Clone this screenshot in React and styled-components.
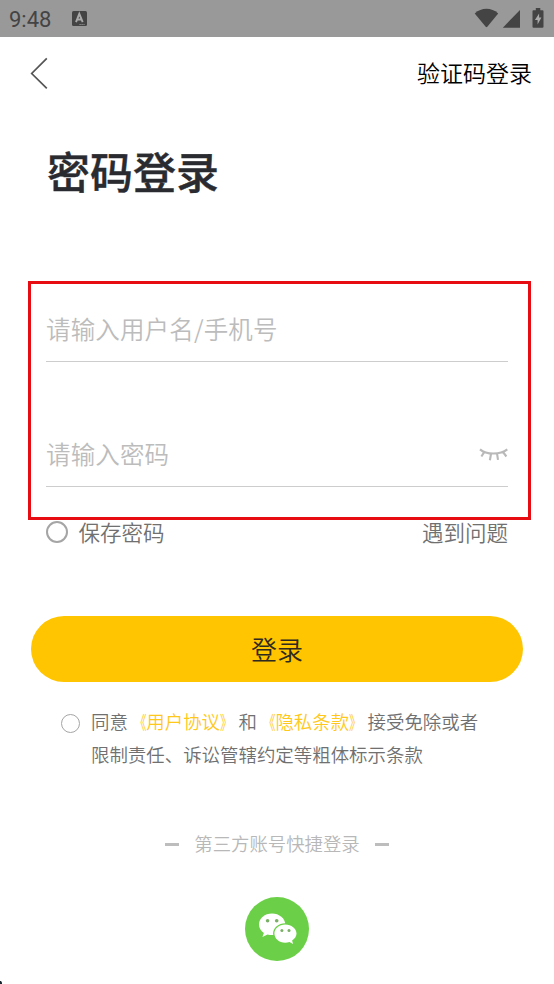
import React from "react";
import styled, { createGlobalStyle } from "styled-components";

const GlobalStyle = createGlobalStyle`
  * { box-sizing: border-box; }
  body {
    margin: 0;
    background: #fff;
    font-family: "Noto Sans CJK SC", sans-serif;
  }
`;

const Screen = styled.main`
  position: relative;
  width: 554px;
  height: 984px;
  overflow: hidden;
  background: #fff;
`;

const StatusBar = styled.header`
  display: flex;
  align-items: center;
  height: 37px;
  padding: 0 9px;
  background: #999;
  color: #444;
`;

const Clock = styled.span`
  width: 62px;
  font: 400 22px/37px Roboto, sans-serif;
  padding-top: 1px;
`;

const StatusIcons = styled.div`
  margin-left: auto;
  height: 37px;
`;

const NavBar = styled.nav`
  display: flex;
  align-items: center;
  justify-content: space-between;
  height: 72px;
  padding: 0 22px 0 29px;
`;

const NavLink = styled.span`
  padding-bottom: 2px;
  font-size: 23px;
  line-height: 34px;
  font-weight: 350;
  color: #000;
`;

const Title = styled.h1`
  margin: 29px 0 0 47px;
  height: 67px;
  font-size: 43px;
  line-height: 64px;
  font-weight: 500;
  -webkit-text-stroke: 0.4px #2a2b30;
  color: #2a2b30;
`;

const Form = styled.section`
  padding: 92px 46px 0;
`;

const Field = styled.div`
  display: flex;
  align-items: center;
  justify-content: space-between;
  height: 65px;
  margin-bottom: 60px;
  border-bottom: 1px solid #cdcdcd;

  &:last-child { margin-bottom: 0; }
`;

const Placeholder = styled.span`
  font-size: 24.5px;
  line-height: 36px;
  font-weight: 350;
  letter-spacing: 0.15px;
  color: #bcbcbc;
`;

const Options = styled.div`
  display: flex;
  align-items: center;
  height: 36px;
  margin: 27px 46px 0;
  font-size: 21.5px;
  line-height: 36px;
  font-weight: 350;
  color: #707070;
`;

const Radio = styled.span`
  flex: none;
  width: ${(p) => p.$size}px;
  height: ${(p) => p.$size}px;
  border: ${(p) => p.$stroke}px solid #a5a5a5;
  border-radius: 50%;
`;

const SaveLabel = styled.span`
  margin-left: 10.5px;
`;

const HelpLink = styled.span`
  margin-left: auto;
`;

const LoginButton = styled.button`
  display: block;
  width: 492px;
  height: 66px;
  margin: 66px 0 0 31px;
  padding: 0;
  border: 0;
  border-radius: 33px;
  background: #ffc500;
  font: 350 26px/66px "Noto Sans CJK SC", sans-serif;
  color: #2e2a20;
`;

const Agreement = styled.div`
  display: flex;
  height: 64px;
  margin: 23px 0 0 61px;

  ${Radio} { margin-top: 9px; }
`;

const Terms = styled.p`
  margin: 0 0 0 11px;
  font-size: 18.45px;
  line-height: 33px;
  font-weight: 350;
  color: #707070;
  white-space: nowrap;
`;

const TermsLink = styled.span`
  color: #ffc81a;
`;

const Bracket = styled.span`
  display: inline-block;
  line-height: 1;
  transform: scaleX(0.68);
  transform-origin: ${(p) => (p.$open ? "right" : "left")} center;
`;

const Divider = styled.div`
  display: flex;
  align-items: center;
  justify-content: center;
  gap: 15px;
  height: 30px;
  margin-top: 60px;
  font-size: 18.4px;
  line-height: 30px;
  font-weight: 350;
  color: #b8b8b8;
`;

const DividerLabel = styled.span`
  padding-bottom: 2px;
`;

const Dash = styled.span`
  width: 14px;
  height: 3px;
  background: #bdbdbd;
`;

const WechatButton = styled.div`
  width: 64px;
  height: 64px;
  margin: 38px auto 0;
`;

const Highlight = styled.div`
  position: absolute;
  left: 28px;
  top: 281px;
  width: 503px;
  height: 239px;
  border: 3px solid #e60c12;
  pointer-events: none;
`;

const Corner = styled.div`
  position: absolute;
  left: 0;
  bottom: 0;
  width: 2px;
  height: 3px;
  background: #17252c;
  clip-path: polygon(0 0, 50% 0, 100% 50%, 100% 100%, 0 100%);
`;

const KeyboardIcon = () => (
  <svg width="16" height="37" viewBox="0 0 16 37" fill="none">
    <rect x="1" y="11" width="15" height="15" rx="1.5" fill="#444" />
    <path d="M5 22.2 8.3 13.8 11.7 22.2M6.2 19.5h4.2" stroke="#aaa" strokeWidth="1.9" />
    <path d="M8.5 24.5h5" stroke="#999" strokeDasharray="1.2 .8" />
  </svg>
);

const PhoneGlyphs = styled.svg`
  display: block;
`;

const PhoneIcons = () => (
  <PhoneGlyphs width="72" height="37" viewBox="473 0 72 37" fill="#444">
    <path d="M474.7 13.4C481.5 7.3 491.4 7.3 498.2 13.4L487.3 26.8Q486.5 27.6 485.7 26.8Z" />
    <path d="M520 10v17.7h-17.2Z" />
    <path d="M535.8 8h4.5v2.2h2.2q1 0 1 1v15.6q0 1-1 1h-9q-1 0-1-1V11.2q0-1 1-1h2.3Z" />
    <path d="M539.1 13.4 534.9 20h2.7v4.5l3.8-6.9h-2.3Z" fill="#aaa" />
  </PhoneGlyphs>
);

const BackIcon = () => (
  <svg width="20" height="34" viewBox="0 0 20 34" fill="none" stroke="#555" strokeWidth="1.7">
    <path d="M17.8 2.4 2.7 17.5 17.8 32.4" />
  </svg>
);

const ClosedEyeIcon = () => (
  <svg width="30" height="16" viewBox="0 0 30 16" fill="none" stroke="#b9b9b9" strokeWidth="2.1">
    <path d="M2 3.4C8.5 8.9 22 9 29.3 3.4M6.2 6.1 3.4 10.5M13 8l-1.1 6.2M19.1 7.9l.9 6M25 6l3.4 4.5" />
  </svg>
);

const WechatGlyph = styled.svg`
  display: block;
`;

const WechatIcon = () => (
  <WechatGlyph width="64" height="64" viewBox="0 0 64 64">
    <circle cx="32" cy="32" r="32" fill="#6bd047" />
    <path d="M27 16.5c-7.2 0-13 4.9-13 11 0 3.5 1.9 6.4 4.9 8.4l-1.5 4 5.1-2.5c1.4.4 2.9.6 4.5.6 7.2 0 13.3-4.7 13.3-10.6S34.2 16.5 27 16.5Z" fill="#fff" />
    <path d="M40.2 26.2c-6.6 0-12.1 4.6-12.1 10.4s5.5 10.4 12.1 10.4c6.7 0 12.1-4.6 12.1-10.4s-5.4-10.4-12.1-10.4Z" fill="#6bd047" />
    <path d="M40.2 27.5c-6 0-10.8 4-10.8 9.1s4.8 9.2 10.8 9.2c1.5 0 3-.3 4.3-.8l3.6 2.1-1-3.5c2.6-1.7 4.4-4.2 4.4-7 0-5.1-5.1-9.1-11.3-9.1Z" fill="#fff" />
    <g fill="#7aaf66">
      <circle cx="22.6" cy="23.7" r="1.8" />
      <circle cx="31.7" cy="23.7" r="1.8" />
      <circle cx="36.9" cy="33.6" r="1.5" />
      <circle cx="44" cy="33.6" r="1.5" />
    </g>
  </WechatGlyph>
);

const DocumentLink = ({ children }) => (
  <TermsLink>
    <Bracket $open>《</Bracket>
    {children}
    <Bracket>》</Bracket>
  </TermsLink>
);

export default function App() {
  return (
    <>
      <GlobalStyle />
      <Screen>
        <StatusBar>
          <Clock>9:48</Clock>
          <KeyboardIcon />
          <StatusIcons><PhoneIcons /></StatusIcons>
        </StatusBar>
        <NavBar>
          <BackIcon />
          <NavLink>验证码登录</NavLink>
        </NavBar>
        <Title>密码登录</Title>
        <Form>
          <Field>
            <Placeholder>请输入用户名/手机号</Placeholder>
          </Field>
          <Field>
            <Placeholder>请输入密码</Placeholder>
            <ClosedEyeIcon />
          </Field>
        </Form>
        <Options>
          <Radio $size={22} $stroke={2} />
          <SaveLabel>保存密码</SaveLabel>
          <HelpLink>遇到问题</HelpLink>
        </Options>
        <LoginButton>登录</LoginButton>
        <Agreement>
          <Radio $size={19} $stroke={1.5} />
          <Terms>
            同意<DocumentLink>用户协议</DocumentLink>和<DocumentLink>隐私条款</DocumentLink>接受免除或者
            <br />
            限制责任、诉讼管辖约定等粗体标示条款
          </Terms>
        </Agreement>
        <Divider>
          <Dash />
          <DividerLabel>第三方账号快捷登录</DividerLabel>
          <Dash />
        </Divider>
        <WechatButton><WechatIcon /></WechatButton>
        <Highlight />
        <Corner />
      </Screen>
    </>
  );
}
